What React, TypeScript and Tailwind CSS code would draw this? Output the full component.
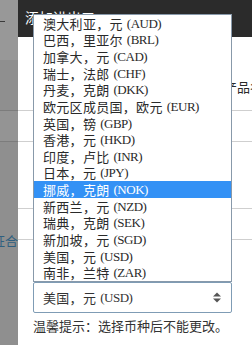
const currencies = [
  { zh: '澳大利亚，元', code: 'AUD' },
  { zh: '巴西，里亚尔', code: 'BRL' },
  { zh: '加拿大，元', code: 'CAD' },
  { zh: '瑞士，法郎', code: 'CHF' },
  { zh: '丹麦，克朗', code: 'DKK' },
  { zh: '欧元区成员国，欧元', code: 'EUR' },
  { zh: '英国，镑', code: 'GBP' },
  { zh: '香港，元', code: 'HKD' },
  { zh: '印度，卢比', code: 'INR' },
  { zh: '日本，元', code: 'JPY' },
  { zh: '挪威，克朗', code: 'NOK' },
  { zh: '新西兰，元', code: 'NZD' },
  { zh: '瑞典，克朗', code: 'SEK' },
  { zh: '新加坡，元', code: 'SGD' },
  { zh: '美国，元', code: 'USD' },
  { zh: '南非，兰特', code: 'ZAR' },
];

function Label({ zh, code }: { zh: string; code: string }) {
  return (
    <div className="flex items-center whitespace-nowrap">
      <span className="block h-[13px] leading-[13px] tracking-[0.3px]">{zh}</span>
      <span className="ml-[4px] block h-[13px] font-['Liberation_Serif',serif] leading-[13px] tracking-[-0.5px]">
        ({code})
      </span>
    </div>
  );
}

function SortArrows() {
  return (
    <svg width="8" height="11" viewBox="0 0 8 11">
      <path d="M0 4.5 L4 0.5 L8 4.5 Z" fill="#555" />
      <path d="M0 6.5 L4 10.5 L8 6.5 Z" fill="#555" />
    </svg>
  );
}

export default function App() {
  return (
    <div className="relative flex h-[345px] w-[252px] overflow-hidden bg-white font-['Noto_Sans_CJK_SC',sans-serif] text-[13px] text-[#2a2a2a]">
      {/* dimmed page behind the dialog */}
      <div className="flex w-[18px] shrink-0 flex-col bg-[#8f8f8f]">
        <div className="h-[60px] bg-[#989898] pt-[21px]">
          <div className="h-px w-[5px] bg-[#3a3a3a]" />
        </div>
        <div className="h-[50px]" />
        <div className="h-px bg-[#7c7c7c]" />
        <div className="h-[30px] bg-[#949494]" />
        <div className="h-px bg-[#7c7c7c]" />
        <div className="mt-[92px] flex justify-end overflow-hidden whitespace-nowrap leading-[13px] text-[#2f5f80]">
          证合
        </div>
      </div>

      {/* dialog */}
      <div className="flex flex-1 flex-col">
        <div className="h-[37px] shrink-0 bg-[#2b2b2b] pl-[7px] pt-[10px] text-[14px] leading-[14px] text-white">
          添加进出口
        </div>
        <div className="h-[74px] border-b border-[#cfcfcf] pl-[206px] pt-[43px] leading-[13px] whitespace-nowrap">
          产品名称
        </div>
        <div className="h-[31px] border-b border-[#cfcfcf]" />
        <div className="h-[67px] border-b border-[#cfcfcf]" />
        <div className="h-[31px] border-b border-[#cfcfcf]" />
        <div className="pl-[15px]">
          <div className="mt-[42px] flex h-[31px] w-[199px] items-center justify-between rounded-[2px] border border-[#7f9cb5] pl-[9px] pr-[10px] text-[#333]">
            <Label zh="美国，元" code="USD" />
            <SortArrows />
          </div>
          <div className="mt-[6px] h-[13px] whitespace-nowrap leading-[13px] text-[#333]">
            温馨提示：选择币种后不能更改。
          </div>
        </div>
      </div>

      {/* open select list */}
      <div className="absolute left-[33px] top-[14px] flex h-[268px] w-[199px] flex-col border border-[#8899aa] bg-white">
        {currencies.map((c) => (
          <div
            key={c.code}
            className={
              c.code === 'NOK'
                ? 'flex flex-1 items-center bg-[#3391f5] pl-[9px] text-white'
                : 'flex flex-1 items-center pl-[9px]'
            }
          >
            <Label zh={c.zh} code={c.code} />
          </div>
        ))}
      </div>
    </div>
  );
}
